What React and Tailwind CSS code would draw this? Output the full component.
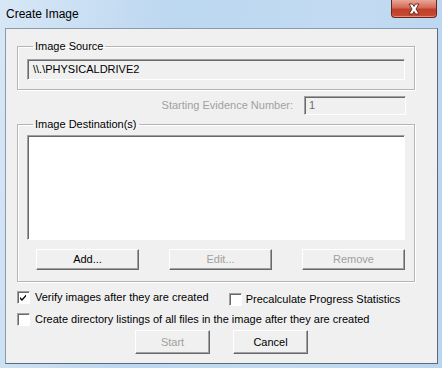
import React from "react";

const font = "font-['Liberation_Sans',Arial,sans-serif]";

const sunken =
  "border border-t-[#a0a0a0] border-l-[#a0a0a0] border-b-white border-r-white shadow-[inset_1px_1px_0_#696969]";

const Button = ({ children, disabled, className = "" }) => (
  <div
    className={`flex items-center justify-center bg-[#f0f0f0] border border-t-white border-l-white border-b-[#696969] border-r-[#696969] shadow-[inset_-1px_-1px_0_#a0a0a0] text-[11px] ${
      disabled ? "text-[#a0a0a0]" : "text-black"
    } ${className}`}
  >
    {children}
  </div>
);

const Checkbox = ({ checked, className = "" }) => (
  <div className={`w-[13px] h-[13px] bg-white flex items-center justify-center shrink-0 ${sunken} ${className}`}>
    {checked && (
      <svg width="9" height="9" viewBox="0 0 9 9">
        <path d="M1 4 L3 6 L7 1.5 L7 3.5 L3 8 L1 6 Z" fill="#000" />
      </svg>
    )}
  </div>
);

const Group = ({ label, children, className = "" }) => (
  <fieldset className={`border border-[#b5b5b5] shadow-[1px_1px_0_#fff,inset_1px_1px_0_#fff] px-[9px] ${className}`}>
    <legend className="ml-[6px] px-[2px] text-[11px] leading-[13px] text-black">{label}</legend>
    {children}
  </fieldset>
);

export default function App() {
  return (
    <div className={`w-[442px] h-[368px] bg-[linear-gradient(100deg,#d7e7f6_0%,#bcd7f0_35%,#c2dbf2_70%,#b9d5ef_100%)] relative overflow-hidden ${font}`}>
      {/* title bar */}
      <div className="h-[28px] flex items-center pl-[6px] text-[12px] text-black">Create Image</div>

      {/* close button */}
      <div className="absolute top-0 right-[5px] w-[46px] h-[18px] rounded-b-[4px] border border-t-0 border-[#6e2418] bg-[linear-gradient(#e9a797_0%,#d46a55_45%,#c0402a_55%,#c84b33_100%)] flex items-center justify-center shadow-[inset_0_-1px_0_#e48a76]">
        <svg width="14" height="12" viewBox="0 0 14 12">
          <path d="M2 1 L5.5 1 L7 3.5 L8.5 1 L12 1 L9 6 L12 11 L8.5 11 L7 8.5 L5.5 11 L2 11 L5 6 Z" fill="#fff" stroke="#5a2318" strokeWidth="0.9" strokeLinejoin="round" />
        </svg>
      </div>

      {/* client area */}
      <div className="ml-[5px] w-[433px] h-[336px] bg-[#f0f0f0] border border-[#8a9aad] border-r-[#5c6a7b] border-b-[#5c6a7b]">
        <Group label="Image Source" className="ml-[11px] mt-[11px] w-[398px] pt-[6px] pb-[9px]">
          <div className={`h-[21px] flex items-center pl-[5px] text-[11px] text-black bg-[#f0f0f0] ${sunken}`}>
            \\.\PHYSICALDRIVE2
          </div>
        </Group>

        <div className="ml-[11px] w-[398px] mt-[6px] pr-[9px] flex justify-end items-center gap-[11px]">
          <span className="text-[11px] text-[#a0a0a0]">Starting Evidence Number:</span>
          <div className={`w-[102px] h-[19px] flex items-center pl-[4px] text-[11px] text-[#6d6d6d] ${sunken}`}>1</div>
        </div>

        <Group label="Image Destination(s)" className="ml-[11px] mt-[3px] w-[398px] pt-[4px] pb-[11px]">
          <div className={`h-[105px] bg-white ${sunken}`} />
          <div className="mt-[9px] ml-[9px] flex gap-[30px]">
            <Button className="w-[103px] h-[21px]">Add...</Button>
            <Button disabled className="w-[103px] h-[21px]">Edit...</Button>
            <Button disabled className="w-[103px] h-[21px]">Remove</Button>
          </div>
        </Group>

        <div className="mt-[9px] ml-[11px] flex items-start text-[11px] leading-[13px] text-black">
          <Checkbox checked />
          <span className="ml-[5px]">Verify images after they are created</span>
          <div className="ml-[20px] mt-[2px] flex items-start">
            <Checkbox />
            <span className="ml-[4px]">Precalculate Progress Statistics</span>
          </div>
        </div>

        <div className="mt-[7px] ml-[11px] flex items-start text-[11px] leading-[13px] text-black">
          <Checkbox />
          <span className="ml-[5px]">Create directory listings of all files in the image after they are created</span>
        </div>

        <div className="mt-[4px] ml-[129px] flex gap-[23px]">
          <Button disabled className="w-[75px] h-[24px]">Start</Button>
          <Button className="w-[75px] h-[24px]">Cancel</Button>
        </div>
      </div>
    </div>
  );
}
